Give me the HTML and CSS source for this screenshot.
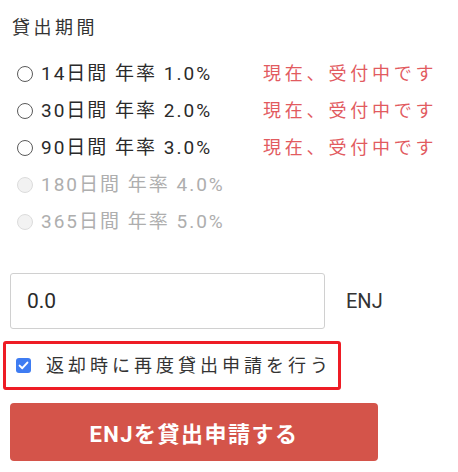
FILE: index.html
```html
<!DOCTYPE html>
<html lang="ja">
<head>
<meta charset="utf-8">
<link rel="stylesheet" href="styles.css">
</head>
<body>
<div class="panel">
  <div class="title">貸出期間</div>
  <ul class="periods">
    <li class="period">
      <label class="opt"><span class="radio"></span><span class="opt-text">14日間 年率 1.0%</span></label>
      <span class="status">現在、受付中です</span>
    </li>
    <li class="period">
      <label class="opt"><span class="radio"></span><span class="opt-text">30日間 年率 2.0%</span></label>
      <span class="status">現在、受付中です</span>
    </li>
    <li class="period">
      <label class="opt"><span class="radio"></span><span class="opt-text">90日間 年率 3.0%</span></label>
      <span class="status">現在、受付中です</span>
    </li>
    <li class="period disabled">
      <label class="opt"><span class="radio"></span><span class="opt-text">180日間 年率 4.0%</span></label>
    </li>
    <li class="period disabled">
      <label class="opt"><span class="radio"></span><span class="opt-text">365日間 年率 5.0%</span></label>
    </li>
  </ul>
  <div class="amount-row">
    <div class="amount-input">0.0</div>
    <span class="unit">ENJ</span>
  </div>
  <div class="renew-box">
    <span class="check"><svg width="15" height="15" viewBox="0 0 15 15"><path d="M3.6 7.6 L6.3 10.2 L11.4 4.6" fill="none" stroke="#fff" stroke-width="2" stroke-linecap="round" stroke-linejoin="round"/></svg></span>
    <span class="renew-text">返却時に再度貸出申請を行う</span>
  </div>
  <button class="submit">ENJを貸出申請する</button>
</div>
</body>
</html>
```
FILE: styles.css
```css
* { box-sizing: border-box; }
html, body { margin: 0; padding: 0; background: #fff; }
body {
  font-family: Roboto, "Noto Sans CJK JP", sans-serif;
  color: #333;
}
.panel {
  display: flex;
  flex-direction: column;
  align-items: flex-start;
  padding: 16px 0 0 0;
}
.title {
  margin-left: 12px;
  font-size: 18px;
  line-height: 24px;
  letter-spacing: 3.5px;
  color: #333;
}
.periods {
  list-style: none;
  margin: 15px 0 0 0;
  padding: 0;
  width: 100%;
}
.period {
  display: flex;
  align-items: center;
  height: 37px;
}
.opt {
  display: flex;
  align-items: center;
  width: 263px;
  padding-left: 17px;
}
.radio {
  width: 16px;
  height: 16px;
  border: 1.3px solid #5a5a5a;
  border-radius: 50%;
  margin-right: 8px;
  flex: none;
}
.opt-text {
  font-size: 19px;
  line-height: 24px;
  letter-spacing: 2px;
  color: #2a2a2a;
}
.status {
  font-size: 18px;
  line-height: 24px;
  letter-spacing: 3.8px;
  color: #e25b5f;
}
.disabled .radio {
  border-color: #dcdcdc;
  background: #f2f2f2;
}
.disabled .opt-text {
  color: #aeaeae;
}
.amount-row {
  display: flex;
  align-items: center;
  margin-top: 33px;
  margin-left: 10px;
}
.amount-input {
  width: 315px;
  height: 56px;
  border: 1px solid #d0d0d0;
  border-radius: 3px;
  padding-left: 16px;
  display: flex;
  align-items: center;
  font-size: 21px;
  color: #2a2a2a;
}
.unit {
  margin-left: 21px;
  font-size: 20px;
  color: #333;
}
.renew-box {
  margin-top: 12px;
  margin-left: 3px;
  width: 338px;
  height: 49px;
  border: 3px solid #ee1c25;
  border-radius: 3px;
  display: flex;
  align-items: center;
  padding-left: 10px;
}
.check {
  width: 15px;
  height: 15px;
  border-radius: 3px;
  background: #3e7cf2;
  display: flex;
  flex: none;
}
.renew-text {
  margin-left: 15px;
  font-size: 18px;
  line-height: 24px;
  letter-spacing: 4px;
  color: #333;
}
.submit {
  margin-top: 13px;
  margin-left: 10px;
  width: 368px;
  height: 58px;
  border: none;
  border-radius: 4px;
  background: #d4544a;
  color: #fff;
  font-family: Roboto, "Noto Sans CJK JP", sans-serif;
  font-weight: 700;
  font-size: 22px;
  letter-spacing: 1.5px;
  padding: 0;
}
```
